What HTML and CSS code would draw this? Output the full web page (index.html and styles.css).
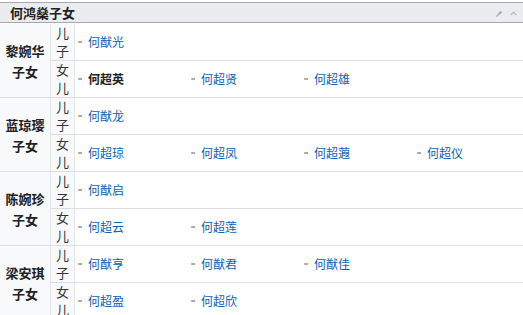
FILE: index.html
```html
<!DOCTYPE html>
<html lang="zh">
<head>
<meta charset="utf-8">
<title>何鸿燊子女</title>
<link rel="stylesheet" href="styles.css">
</head>
<body>
<div class="navbox">
  <div class="head">
    <span class="title">何鸿燊子女</span>
    <span class="tools">
      <svg class="pin" width="7" height="7" viewBox="0 0 7 7"><path d="M0.5 6.5 L3 4" stroke="#a7adb6" stroke-width="1.2" fill="none"/><path d="M2.2 3.2 L4.8 0.8 L6.2 2.2 L3.8 4.8 Z" fill="#a7adb6"/></svg>
      <svg class="chev" width="7" height="5" viewBox="0 0 7 5"><path d="M0.6 4.2 L3.5 1.3 L6.4 4.2" stroke="#b3b8c0" stroke-width="1.2" fill="none"/></svg>
    </span>
  </div>

  <div class="group">
    <div class="glabel">黎婉华子女</div>
    <div class="rows">
      <div class="row"><div class="sub">儿子</div>
        <ul class="list"><li><a href="#">何猷光</a></li></ul></div>
      <div class="row"><div class="sub">女儿</div>
        <ul class="list"><li><strong>何超英</strong></li><li><a href="#">何超贤</a></li><li><a href="#">何超雄</a></li></ul></div>
    </div>
  </div>

  <div class="group">
    <div class="glabel">蓝琼璎子女</div>
    <div class="rows">
      <div class="row"><div class="sub">儿子</div>
        <ul class="list"><li><a href="#">何猷龙</a></li></ul></div>
      <div class="row"><div class="sub">女儿</div>
        <ul class="list"><li><a href="#">何超琼</a></li><li><a href="#">何超凤</a></li><li><a href="#">何超蕸</a></li><li><a href="#">何超仪</a></li></ul></div>
    </div>
  </div>

  <div class="group">
    <div class="glabel">陈婉珍子女</div>
    <div class="rows">
      <div class="row"><div class="sub">儿子</div>
        <ul class="list"><li><a href="#">何猷启</a></li></ul></div>
      <div class="row"><div class="sub">女儿</div>
        <ul class="list"><li><a href="#">何超云</a></li><li><a href="#">何超莲</a></li></ul></div>
    </div>
  </div>

  <div class="group">
    <div class="glabel">梁安琪子女</div>
    <div class="rows">
      <div class="row"><div class="sub">儿子</div>
        <ul class="list"><li><a href="#">何猷亨</a></li><li><a href="#">何猷君</a></li><li><a href="#">何猷佳</a></li></ul></div>
      <div class="row"><div class="sub">女儿</div>
        <ul class="list"><li><a href="#">何超盈</a></li><li><a href="#">何超欣</a></li></ul></div>
    </div>
  </div>
</div>
</body>
</html>
```

FILE: styles.css
```css
* { box-sizing: border-box; }
html, body {
  margin: 0;
  padding: 0;
  background: #ffffff;
  overflow: hidden;
}
body {
  font-family: "Noto Sans CJK SC", "Noto Sans", sans-serif;
  color: #202122;
}
.navbox {
  padding-top: 2px;
  width: 523px;
}
.head {
  height: 21px;
  border-top: 1px solid #a2a9b1;
  border-bottom: 1px solid #a2a9b1;
  background: #eaecf0;
  display: flex;
  align-items: center;
  justify-content: space-between;
  padding: 0 6px 0 10px;
}
.title {
  font-size: 13px;
  font-weight: bold;
  line-height: 19px;
  color: #202122;
}
.tools {
  display: flex;
  align-items: center;
  gap: 7px;
  padding-top: 1px;
}
.pin, .chev { display: block; }
.group {
  display: flex;
  margin-top: 1px;
  border-bottom: 1px solid #dcdde0;
}
.group + .group { margin-top: 0; }
.glabel {
  width: 51px;
  flex: none;
  background: #f8f9fa;
  border-right: 1px solid #e3e5e8;
  display: flex;
  align-items: center;
  justify-content: center;
  text-align: center;
  font-size: 13px;
  font-weight: bold;
  line-height: 21px;
  padding: 0 3px;
  color: #202122;
}
.rows {
  flex: 1;
  display: flex;
  flex-direction: column;
}
.row {
  display: flex;
  height: 36px;
}
.row + .row {
  height: 37px;
  border-top: 1px solid #dcdde0;
}
.sub {
  width: 24px;
  flex: none;
  background: #f8f9fa;
  border-right: 1px solid #e3e5e8;
  font-size: 13px;
  line-height: 18px;
  color: #333333;
  text-align: center;
  display: flex;
  align-items: center;
  justify-content: center;
  padding: 0 1px;
}
.list {
  list-style: none;
  margin: 0;
  padding: 0 0 0 3px;
  flex: 1;
  display: grid;
  grid-template-columns: repeat(4, 113px);
  align-items: center;
}
.list li {
  display: flex;
  align-items: center;
  font-size: 12px;
  line-height: 18px;
}
.list li::before {
  content: "";
  width: 4px;
  height: 2px;
  margin-right: 6px;
  margin-top: 0px;
  background: linear-gradient(to right, #d9b48a 0 1px, #a3aab6 1px);
}
.list a {
  color: #0b5fb5;
  text-decoration: none;
}
.list strong {
  font-weight: bold;
  color: #202122;
}
```
